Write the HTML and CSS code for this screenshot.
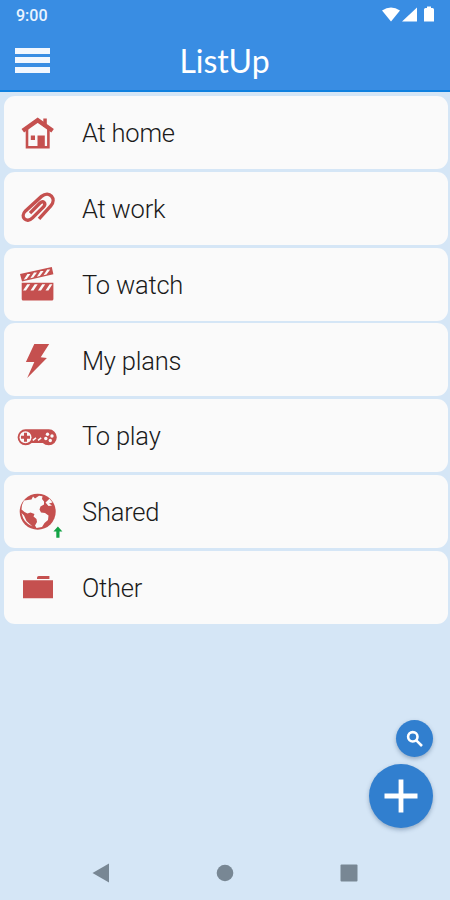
FILE: index.html
```html
<!DOCTYPE html>
<html lang="en">
<head>
    <meta charset="UTF-8">
    <title>ListUp</title>
    <meta name="viewport" content="width=device-width, initial-scale=1.0">
    <link rel="stylesheet" href="styles.css">
</head>
<body>
    <header class="header">
        <div class="status-bar">
            <span class="clock">9:00</span>
            <svg class="status-icons" width="54" height="18" viewBox="0 0 54 18">
                <path d="M0 4.500Q9 -1.500 18 4.500L9 15.500Z"/>
                <path d="M35 1.500V15.500H20Z"/>
                <path d="M42 3.500Q42 2 43.500 2H45V.500H49V2H50.500Q52 2 52 3.500V15.500H42Z"/>
            </svg>
        </div>
        <div class="toolbar">
            <button class="menu-btn" aria-label="Menu"><span></span><span></span><span></span></button>
            <h1>ListUp</h1>
        </div>
    </header>

    <main class="lists">
        <a class="card">
            <svg class="icon" viewBox="0 0 48 48">
                <path d="M29.300 9.500H32.800V18H29.300Z"/>
                <path class="line" d="M8.800 21.800L23.700 11.300L38.600 21.800" stroke-width="4.400"/>
                <path class="line" d="M13 19.500V38.200H34.400V19.500" stroke-width="2.600"/>
                <path d="M16.800 26.500H21V30.900H16.800ZM23.500 26.500H30.800V38H23.500Z"/>
            </svg>
            <span>At home</span>
        </a>
        <a class="card">
            <svg class="icon" viewBox="0 0 48 48">
                <path class="line" stroke-width="3.400" d="M25 34.800L36.800 21.900C43 14.900 35.500 5.900 27.500 12.400L11.500 26.900C5.500 32.900 12.500 39.900 18.500 33.900L29.500 22.900C33 18.900 29 16.400 26 19.100L16 29.100"/>
            </svg>
            <span>At work</span>
        </a>
        <a class="card">
            <svg class="icon" viewBox="0 0 48 48">
                <path d="M6 14L37.800 7L39.400 14.300L8 21.500ZM7.700 22.700H39.400V39Q39.400 40.500 37.900 40.500H9.200Q7.700 40.500 7.700 39Z"/>
                <path class="cut" d="M9.700 19.700L13.400 14H16.400L12.700 19ZM16.300 18.200L20 12.500H23L19.300 17.500ZM22.900 16.700L26.600 11H29.600L25.900 16ZM29.500 15.200L33.200 9.600H36.200L32.500 14.500ZM9 30.500L13.200 24.300H16.200L12 30.500ZM16.500 30.500L20.700 24.300H23.700L19.500 30.500ZM24 30.500L28.200 24.300H31.200L27 30.500ZM31.500 30.500L35.700 24.300H38.400L34.400 30.500Z"/>
            </svg>
            <span>To watch</span>
        </a>
        <a class="card">
            <svg class="icon" viewBox="0 0 48 48">
                <path d="M20.300 8H35.200L26.700 21.300L32.900 22L13.200 42L20.300 25.900H11.900Z"/>
            </svg>
            <span>My plans</span>
        </a>
        <a class="card">
            <svg class="icon" viewBox="0 0 48 48">
                <path d="M11.600 17.300H34.800A8 8 0 0 1 34.800 33.300Q31 33.300 28.800 30.900H17.600Q15.400 33.300 11.600 33.300A8 8 0 0 1 11.600 17.300Z"/>
                <circle class="cut" cx="11.500" cy="25.300" r="6"/>
                <path d="M10 20.800H13V23.800H16V26.800H13V29.800H10V26.800H7V23.800H10Z"/>
                <path class="cut-line" d="M18.800 28.300L22 25.800M24 28.300L27.200 25.800"/>
                <g class="cut">
                    <circle cx="33.500" cy="22.300" r="1.700"/>
                    <circle cx="38" cy="24" r="1.700"/>
                    <circle cx="31.800" cy="26.500" r="1.700"/>
                    <circle cx="36.300" cy="28.500" r="1.700"/>
                </g>
            </svg>
            <span>To play</span>
        </a>
        <a class="card">
            <svg class="icon" viewBox="0 0 48 48">
                <circle cx="23.700" cy="24.700" r="18"/>
                <!-- continents -->
                <path class="cut" d="M10 13.500L17.500 12.500L19 9.500L21 11.500L25 8.700L28.500 9.200L28 12L30 14.500L30 17.500L26.500 19.500L25.500 22.500L27 25.500L31 26L34.500 28.500L34 33L30.500 36L28 40L22.500 41L21 38.500L23 35L22.500 32L19.500 29.500L20.500 27L16.500 25.500L13.500 26.500L10.500 25L7.500 22.500L8 18Z"/>
                <path class="cut" d="M31.500 15.500L35.500 11.800L38.500 15.500L35 16.500L38 18.500L34.500 19Z"/>
                <path class="cut" d="M7.500 26L10 28.500L12.500 34L18.500 39.500Q9.500 36 7.500 26Z"/>
                <path class="share" d="M43.900 39.500L48.400 44.600H45.500V50.800H42.300V44.600H39.400Z"/>
            </svg>
            <span>Shared</span>
        </a>
        <a class="card">
            <svg class="icon" viewBox="0 0 48 48">
                <path d="M9 17.200H39V35.200H9ZM23 16V14.700Q23 13 24.700 13H35.400V16Z"/>
            </svg>
            <span>Other</span>
        </a>
    </main>

    <div class="actions">
        <button class="fab fab-small" aria-label="Search">
            <svg width="18" height="18" viewBox="0 0 18 18">
                <circle cx="6.800" cy="6.800" r="4.700"/>
                <path d="M10.300 10.300L16 16"/>
            </svg>
        </button>
        <button class="fab" aria-label="Add">
            <svg width="34" height="34" viewBox="0 0 34 34">
                <path d="M17 .500V33.500M.500 17H33.500" stroke-width="4.800"/>
            </svg>
        </button>
    </div>

    <nav class="nav-bar">
        <svg width="18" height="20" viewBox="0 0 18 20"><path d="M.500 10L17 .500V19.500Z"/></svg>
        <svg width="18" height="18" viewBox="0 0 18 18"><circle cx="9" cy="9" r="8.300"/></svg>
        <svg width="18" height="18" viewBox="0 0 18 18"><rect x=".500" y=".500" width="17" height="17" rx="1"/></svg>
    </nav>
</body>
</html>
```

FILE: styles.css
```css
* {
    box-sizing: border-box;
}

body {
    margin: 0;
    height: 100vh;
    display: flex;
    flex-direction: column;
    font-family: Roboto, sans-serif;
    background: #d5e6f6;
    overflow: hidden;
}

button {
    border: none;
    padding: 0;
    cursor: pointer;
}

/* Header */
.header {
    height: 92px;
    background: #398de3;
    border-bottom: 2px solid #0f80df;
    color: #fff;
}

.status-bar {
    display: flex;
    justify-content: space-between;
    align-items: center;
    height: 30px;
    padding: 0 14px 0 16px;
}

.clock {
    font-size: 16px;
    font-weight: 500;
    color: #eaf4ff;
}

.status-icons {
    fill: #fff;
}

.toolbar {
    display: grid;
    grid-template-columns: 35px 1fr 35px;
    align-items: center;
    height: 60px;
    padding: 0 16px 0 15px;
}

.menu-btn {
    display: flex;
    flex-direction: column;
    gap: 3.5px;
    background: none;
}

.menu-btn span {
    height: 6px;
    background: #f2f7fe;
}

h1 {
    margin: 0;
    font-family: Lato, sans-serif;
    font-size: 32px;
    font-weight: 400;
    text-align: center;
}

/* Lists */
.lists {
    display: flex;
    flex-direction: column;
    gap: 2.8px;
    padding: 4px 2.5px 0 4.3px;
}

.card {
    display: flex;
    align-items: center;
    height: 73px;
    padding-left: 9.7px;
    border-radius: 11px;
    background: #fafafa;
    font-size: 25.5px;
    font-weight: 350;
    letter-spacing: -0.2px;
    color: #1a1a1a;
}

.card span {
    padding-top: 1.5px;
}

.icon {
    width: 48px;
    height: 48px;
    margin-right: 20px;
    fill: #c5504f;
    overflow: visible;
}

.icon .line {
    fill: none;
    stroke: #c5504f;
}

.icon .cut {
    fill: #fafafa;
}

.icon .cut-line {
    fill: none;
    stroke: #fafafa;
    stroke-width: 1.5;
}

.icon .share {
    fill: #12a345;
}

/* Floating buttons */
.actions {
    display: flex;
    flex-direction: column;
    align-items: flex-end;
    gap: 7px;
    margin-top: auto;
    padding: 0 17px 18px;
}

.fab {
    display: flex;
    align-items: center;
    justify-content: center;
    width: 64px;
    height: 64px;
    border-radius: 50%;
    background: #317fcf;
    box-shadow: 0 2px 4px rgba(30, 60, 100, 0.35);
}

.fab-small {
    width: 37px;
    height: 37px;
}

.fab svg {
    fill: none;
    stroke: #fff;
    stroke-width: 2.6;
}

/* System navigation */
.nav-bar {
    display: flex;
    align-items: center;
    justify-content: space-between;
    height: 54px;
    padding: 0 92px;
    fill: #788794;
}
```
